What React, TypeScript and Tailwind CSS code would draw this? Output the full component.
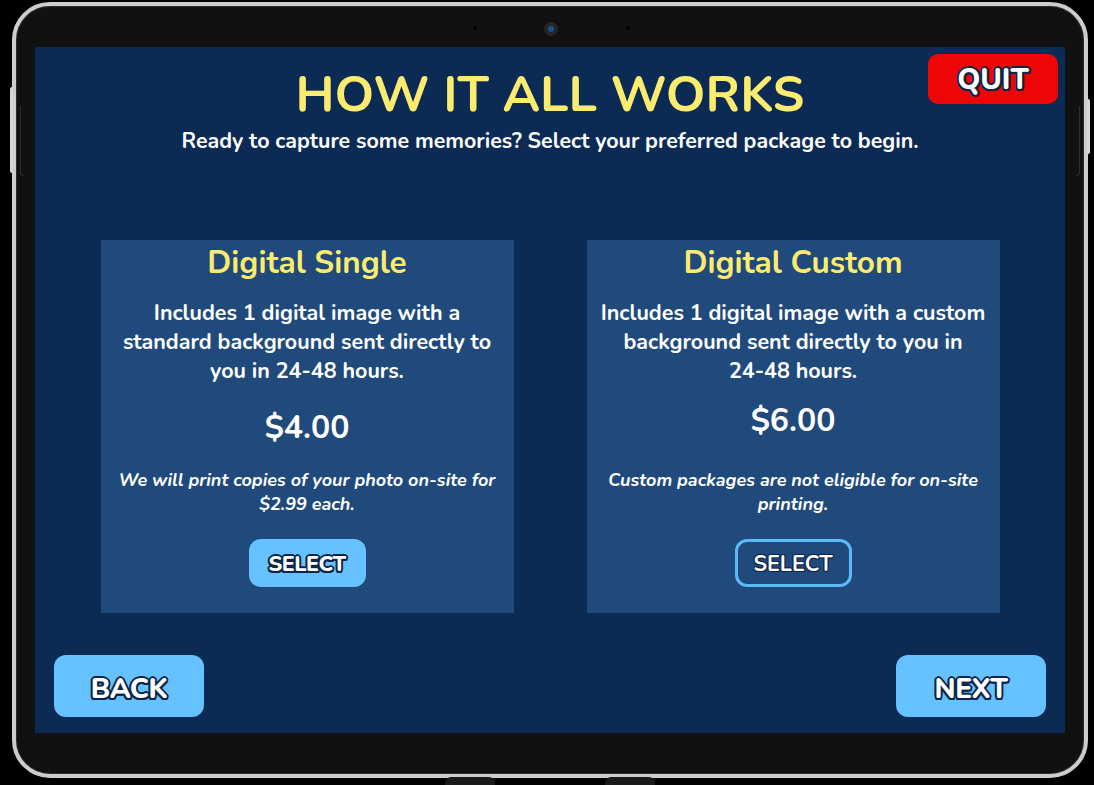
import React from 'react';

const outline =
  '[text-shadow:2px_0_#0b2548,-2px_0_#0b2548,0_2px_#0b2548,0_-2px_#0b2548,1.5px_1.5px_#0b2548,-1.5px_1.5px_#0b2548,1.5px_-1.5px_#0b2548,-1.5px_-1.5px_#0b2548]';

const font = "font-['Nunito','Lato',sans-serif]";

const Card = ({
  title,
  lines,
  price,
  note,
  priceGap,
  noteGap,
  filled,
}: {
  title: string;
  lines: string[];
  price: string;
  note: string[];
  priceGap: string;
  noteGap: string;
  filled: boolean;
}) => (
  <div className="w-[413px] h-[373px] bg-[#1f4a7b] flex flex-col items-center pt-[3px] text-white">
    <h2 className="text-[31.5px] leading-[40px] font-bold text-[#fbec6f]">{title}</h2>
    <p className="mt-[16px] text-[21.5px] leading-[29px] font-bold text-center">
      {lines.map((l, i) => (
        <span key={i} className="block whitespace-nowrap">{l}</span>
      ))}
    </p>
    <div className={`${priceGap} text-[32px] leading-[40px] font-bold`}>{price}</div>
    <p className={`${noteGap} text-[18px] leading-[24px] font-bold italic text-center`}>
      {note.map((l, i) => (
        <span key={i} className="block whitespace-nowrap">{l}</span>
      ))}
    </p>
    <button
      className={
        filled
          ? `mt-[23px] w-[117px] h-[48px] pt-[3px] rounded-[12px] bg-[#66c2ff] text-[21.5px] font-extrabold tracking-[-0.5px] ${outline}`
          : 'mt-[23px] w-[117px] h-[48px] pt-[3px] rounded-[12px] border-[3px] border-[#5cb9f7] text-[21.5px] font-bold [text-shadow:1px_1px_#0b2548,-1px_1px_#0b2548,1px_-1px_#0b2548,-1px_-1px_#0b2548]'
      }
    >
      SELECT
    </button>
  </div>
);

export default function App() {
  return (
    <div className={`w-full h-[785px] bg-black pl-[12px] pt-[2px] overflow-hidden ${font}`}>
      <div className="relative w-[1076px] h-[776px] rounded-[38px] border-[4px] border-[#cdcdcd] bg-[#111111] px-[19px] pt-[41px] shadow-[inset_0_0_0_1px_#2b2b2b]">
        {/* side buttons */}
        <div className="absolute left-[-6px] top-[81px] w-[3px] h-[86px] rounded-l-[2px] bg-[#d6d6d6]" />
        <div className="absolute left-[4px] top-[100px] w-[4px] h-[70px] rounded-bl-[4px] border-l border-b border-[#2e2e2e]" />
        <div className="absolute right-[-6px] top-[93px] w-[3px] h-[55px] rounded-r-[2px] bg-[#d6d6d6]" />
        <div className="absolute right-[4px] top-[100px] w-[4px] h-[70px] rounded-br-[4px] border-r border-b border-[#2e2e2e]" />
        <div className="absolute left-[429px] bottom-[-11px] w-[50px] h-[8px] rounded-t-[6px] bg-[#1a1a1a]" />
        <div className="absolute left-[589px] bottom-[-11px] w-[50px] h-[8px] rounded-t-[6px] bg-[#1a1a1a]" />
        {/* camera */}
        <div className="absolute left-[457px] top-[20px] w-[4px] h-[4px] rounded-full bg-[#000]" />
        <div className="absolute left-[528px] top-[16px] w-[14px] h-[14px] rounded-full bg-[#262626] flex items-center justify-center">
          <div className="w-[6px] h-[6px] rounded-full bg-[#1d4f8f]" />
        </div>
        <div className="absolute left-[610px] top-[20px] w-[4px] h-[4px] rounded-full bg-[#000]" />

        {/* screen */}
        <div className="relative w-[1030px] h-[686px] bg-[#0b2b55] flex flex-col">
          <button
            className={`absolute top-[7px] right-[7px] w-[130px] h-[50px] pt-[2px] rounded-[10px] bg-[#ee0505] text-white text-[29px] font-extrabold ${outline}`}
          >
            QUIT
          </button>

          <h1 className="mt-[18px] text-center text-[50.5px] leading-[60px] font-bold text-[#fbec6f]">
            HOW IT ALL WORKS
          </h1>
          <p className="mt-[2px] text-center text-[21.4px] leading-[28px] font-bold text-white">
            Ready to capture some memories? Select your preferred package to begin.
          </p>

          <div className="mt-[85px] flex justify-center gap-[73px]">
            <Card
              title="Digital Single"
              lines={['Includes 1 digital image with a', 'standard background sent directly to', 'you in 24-48 hours.']}
              price="$4.00"
              note={['We will print copies of your photo on-site for', '$2.99 each.']}
              priceGap="mt-[22px]"
              noteGap="mt-[20px]"
              filled
            />
            <Card
              title="Digital Custom"
              lines={['Includes 1 digital image with a custom', 'background sent directly to you in', '24-48 hours.']}
              price="$6.00"
              note={['Custom packages are not eligible for on-site', 'printing.']}
              priceGap="mt-[15px]"
              noteGap="mt-[27px]"
              filled={false}
            />
          </div>

          <div className="mt-auto mb-[16px] flex justify-between px-[19px]">
            <button className={`w-[150px] h-[62px] pt-[5px] rounded-[12px] bg-[#66c2ff] text-white text-[28px] font-extrabold tracking-[-0.5px] ${outline}`}>
              BACK
            </button>
            <button className={`w-[150px] h-[62px] pt-[5px] rounded-[12px] bg-[#66c2ff] text-white text-[28px] font-extrabold tracking-[-0.5px] ${outline}`}>
              NEXT
            </button>
          </div>
        </div>
      </div>
    </div>
  );
}
